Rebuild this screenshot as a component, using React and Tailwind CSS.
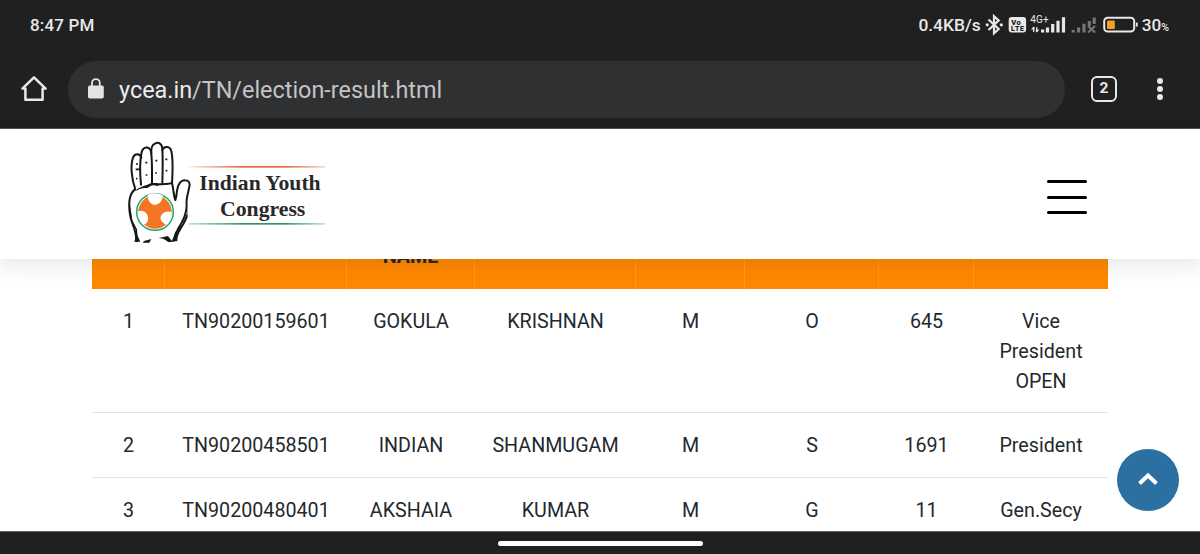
import React from "react";

const columns = [
  { width: "w-[73px]", title: "" },
  { width: "w-[182px]", title: "" },
  { width: "w-[128px]", title: "NAME" },
  { width: "w-[161px]", title: "" },
  { width: "w-[109px]", title: "" },
  { width: "w-[134px]", title: "" },
  { width: "w-[95px]", title: "" },
  { width: "w-[134px]", title: "" },
];

const rows = [
  ["1", "TN90200159601", "GOKULA", "KRISHNAN", "M", "O", "645", "Vice President OPEN"],
  ["2", "TN90200458501", "INDIAN", "SHANMUGAM", "M", "S", "1691", "President"],
  ["3", "TN90200480401", "AKSHAIA", "KUMAR", "M", "G", "11", "Gen.Secy"],
];

function StatusIcons() {
  return (
    <svg width="154" height="30" viewBox="984 10 154 30" fill="none" stroke="#e8e8e8">
      {/* bluetooth */}
      <path d="M988.5 19.5L998.7 29L994 33.2V16.2L998.7 20.4L988.5 30" strokeWidth="2.2" />
      <circle cx="987.2" cy="24.8" r="1.6" fill="#e8e8e8" stroke="none" />
      <circle cx="1001.3" cy="24.8" r="1.6" fill="#e8e8e8" stroke="none" />
      {/* VoLTE */}
      <rect x="1008.7" y="17" width="17.4" height="15.6" rx="3" fill="#e8e8e8" stroke="none" />
      <g fill="#202020" stroke="none" fontFamily="Roboto, sans-serif" fontWeight="900">
        <text x="1011.3" y="24.6" fontSize="7.5" textLength="9.5">Vo</text>
        <text x="1011" y="31.2" fontSize="7" textLength="13">LTE</text>
      </g>
      {/* mobile data */}
      <text x="1030.3" y="23" fontSize="10" fill="#e8e8e8" stroke="none" fontFamily="Roboto, sans-serif" textLength="18.5">4G+</text>
      <path d="M1033.6 32V27.5M1036.8 27V32" strokeWidth="1.2" />
      <path d="M1031 29.6l2.6-3l1 1v2zM1039.4 29.5l-2.6 3l-1-1v-2z" fill="#e8e8e8" stroke="none" />
      <path d="M1042.6 32.5v-3M1047.5 32.5v-5M1052.7 32.5v-8.5M1058 32.5v-11.7M1063.5 32.5V17.3" strokeWidth="3.2" />
      {/* second sim, no signal */}
      <g stroke="#777">
        <path d="M1073.2 32.5v-2.6M1078.6 32.5v-5M1084 32.5v-8.8M1089.3 26v-5M1094.2 24v-6.4" strokeWidth="3.1" />
        <path d="M1088 26l7 6.5M1095 26l-7 6.5" strokeWidth="2" />
      </g>
      {/* battery */}
      <rect x="1104.2" y="17.8" width="30" height="13.8" rx="3.5" strokeWidth="2" />
      <rect x="1107" y="20.4" width="7.8" height="8.6" rx="1" fill="#f2a01e" stroke="none" />
      <path d="M1136.8 22.6v4" strokeWidth="1.8" />
    </svg>
  );
}

function StatusBar() {
  return (
    <div className="flex h-[50px] items-center justify-between pl-[30px] pr-[31px] text-[#e8e8e8]">
      <span className="mt-[2px] text-[17px] font-medium tracking-[0.15px]">8:47 PM</span>
      <div className="flex items-center">
        <span className="mt-[1px] text-[17.4px] font-medium">0.4KB/s</span>
        <span className="ml-[3px]">
          <StatusIcons />
        </span>
        <span className="ml-[4px] mt-[1px] text-[17.2px] font-medium">30</span>
        <span className="mt-[5px] text-[10.5px] font-medium">%</span>
      </div>
    </div>
  );
}

function AddressBar() {
  return (
    <div className="flex h-[78px] items-center">
      <svg className="ml-[20px]" width="28" height="28" viewBox="0 0 28 28" fill="none" stroke="#e8e8e8" strokeWidth="2.5" strokeLinejoin="round">
        <path d="M2.4 13.6L14 2.3L25.6 13.6H22.6V24.7H5.4V13.6Z" />
      </svg>
      <div className="ml-[20px] flex h-[57px] w-[997px] items-center rounded-full bg-[#2f3032] pl-[20px]">
        <svg width="16" height="22" viewBox="0 0 16 22">
          <rect y="7.5" width="15.8" height="13" rx="1.8" fill="#e3e3e3" />
          <path d="M4 8V5a3.9 3.9 0 0 1 7.8 0V8" fill="none" stroke="#e3e3e3" strokeWidth="1.8" />
        </svg>
        <span className="ml-[15px] mt-[3px] whitespace-nowrap text-[23.4px] text-[#c3c4c5]">
          <span className="text-[#ececec]">ycea.in</span>/TN/election-result.html
        </span>
      </div>
      <div className="ml-[26px] flex h-[26px] w-[26px] items-center justify-center rounded-[6px] border-[2.5px] border-[#e8e8e8] text-[15.5px] font-bold text-[#e8e8e8]">
        2
      </div>
      <div className="ml-[40px] flex flex-col gap-[2.4px]">
        <i className="h-[6px] w-[6px] rounded-full bg-[#e8e8e8]" />
        <i className="h-[6px] w-[6px] rounded-full bg-[#e8e8e8]" />
        <i className="h-[6px] w-[6px] rounded-full bg-[#e8e8e8]" />
      </div>
    </div>
  );
}

function Logo() {
  return (
    <svg className="-mt-[2px]" width="210" height="110" viewBox="0 0 630 330">
      <defs>
        <linearGradient id="saffron">
          <stop offset="0" stopColor="#e4672f" stopOpacity="0.1" />
          <stop offset=".4" stopColor="#df6b40" />
          <stop offset=".7" stopColor="#df6b40" />
          <stop offset="1" stopColor="#e4672f" stopOpacity=".25" />
        </linearGradient>
        <linearGradient id="green">
          <stop offset="0" stopColor="#36a06c" stopOpacity=".3" />
          <stop offset=".4" stopColor="#36935f" />
          <stop offset=".7" stopColor="#36935f" />
          <stop offset="1" stopColor="#36a06c" stopOpacity=".3" />
        </linearGradient>
      </defs>
      <g fill="none" stroke="#171717" strokeWidth="6" strokeLinecap="round" strokeLinejoin="round">
        {/* fingers */}
        <path d="M46 154C34 120 31 82 39 59C44 45 60 46 64 59" />
        <path d="M63 140C59 101 60 66 65 42C70 25 88 24 93 40C97 66 96 104 96 137" />
        <path d="M94 46C93 33 97 20 105 17C115 10 126 17 127 32C129 66 128 104 127 135" />
        <path d="M127 37C131 22 151 24 154 40C160 65 158 103 156 136" />
        {/* palm */}
        <path d="M45 154C28 167 25 198 30 230C33 257 49 272 49 308" />
        <path d="M156 136C161 151 160 174 166 186C171 174 169 151 177 139C185 123 208 123 209 140C207 160 197 178 200 202C201 232 185 256 174 273C166 286 165 299 159 308" />
      </g>
      <path d="M44 160C58 145 81 142 89 137C99 132 118 140 157 132L160 137C139 143 121 139 112 144C97 138 90 144 81 151C70 148 56 155 44 160Z" fill="#171717" />
      <path d="M29 192L27 214L34 248L47 275V312H54L51 274L37 247ZM160 153L166 190L173 168L166 176ZM200 194L201 226L187 258L165 284L157 311L172 309C171 286 192 267 203 238Z" fill="#171717" />
      <path d="M50 287L61 311H43ZM72 309L94 303L88 314H68ZM116 300L144 294L158 312H145L130 302Z" fill="#171717" />
      <path d="M48 78h6M76 74h6M106 68h6M136 64h6M47 94h13M48 122h4M77 111h5M106 105h5M137 98h5" stroke="#171717" strokeWidth="5" />
      {/* emblem */}
      <circle cx="105" cy="222" r="55" fill="#fff" stroke="#25a568" strokeWidth="4.5" />
      <circle cx="105" cy="222" r="50" fill="#f27624" />
      <path d="M83 170C82 210 128 210 128 172A55 55 0 0 0 83 170ZM54 221C69 213 86 226 84 243C83 255 75 263 67 257A53 53 0 0 1 54 221ZM155 222C132 215 117 233 123 246C128 255 137 262 144 257A53 53 0 0 0 155 222Z" fill="#fff" />
      <rect x="205" y="84" width="410" height="5" fill="url(#saffron)" />
      <rect x="205" y="255" width="410" height="5" fill="url(#green)" />
      <g fill="#29292b" fontFamily="'Liberation Serif', serif" fontWeight="700" fontSize="63" lengthAdjust="spacingAndGlyphs">
        <text x="238" y="156" textLength="364" lengthAdjust="spacingAndGlyphs">Indian Youth</text>
        <text x="300" y="234" textLength="256" lengthAdjust="spacingAndGlyphs">Congress</text>
      </g>
    </svg>
  );
}

function SiteHeader() {
  return (
    <header className="relative z-10 flex h-[130px] items-center justify-between bg-white pl-[120px] pr-[113px] shadow-[0_6px_22px_rgba(0,0,0,0.10)]">
      <Logo />
      <div className="mt-[6px] flex w-[40px] flex-col gap-[12.5px]">
        <i className="h-[3px] rounded-full bg-black" />
        <i className="h-[3px] rounded-full bg-black" />
        <i className="h-[3px] rounded-full bg-black" />
      </div>
    </header>
  );
}

function ResultTable() {
  return (
    <div className="ml-[92px] w-[1016px] text-center text-[19.7px] leading-[29.8px] text-[#24292d]">
      <div className="flex h-[30px] bg-[#ff8800]">
        {columns.map((col, i) => (
          <div key={i} className={`${col.width} shrink-0 border-r border-[#ff981f] last:border-r-0`}>
            <div className="-mt-[17px] font-bold">{col.title}</div>
          </div>
        ))}
      </div>
      {rows.map((row) => (
        <div key={row[0]} className="flex border-b border-[#dee2e6] pb-[16px] pt-[18px]">
          {row.map((cell, i) => (
            <div key={i} className={`${columns[i].width} shrink-0 px-[17px]`}>
              {cell}
            </div>
          ))}
        </div>
      ))}
    </div>
  );
}

export default function App() {
  return (
    <div className="relative flex h-[554px] w-[1200px] flex-col overflow-hidden bg-white font-[Roboto,sans-serif]">
      <div className="h-[129px] shrink-0 border-b border-[#555] bg-[#202020]">
        <StatusBar />
        <AddressBar />
      </div>
      <SiteHeader />
      <main className="h-[272px] shrink-0 overflow-hidden">
        <ResultTable />
      </main>
      <div className="flex h-[23px] shrink-0 justify-center border-t border-[#666] bg-[#202020] pt-[9px]">
        <div className="h-[5px] w-[205px] rounded-full bg-white" />
      </div>
      <button className="absolute left-[1117px] top-[449px] flex h-[62px] w-[62px] items-center justify-center rounded-full bg-[#2b70a1]">
        <svg className="-mt-[3px]" width="22" height="16" viewBox="0 0 22 16" fill="none" stroke="#fff" strokeWidth="4">
          <path d="M2.5 12.5L11 4.6L19.5 12.5" />
        </svg>
      </button>
    </div>
  );
}
